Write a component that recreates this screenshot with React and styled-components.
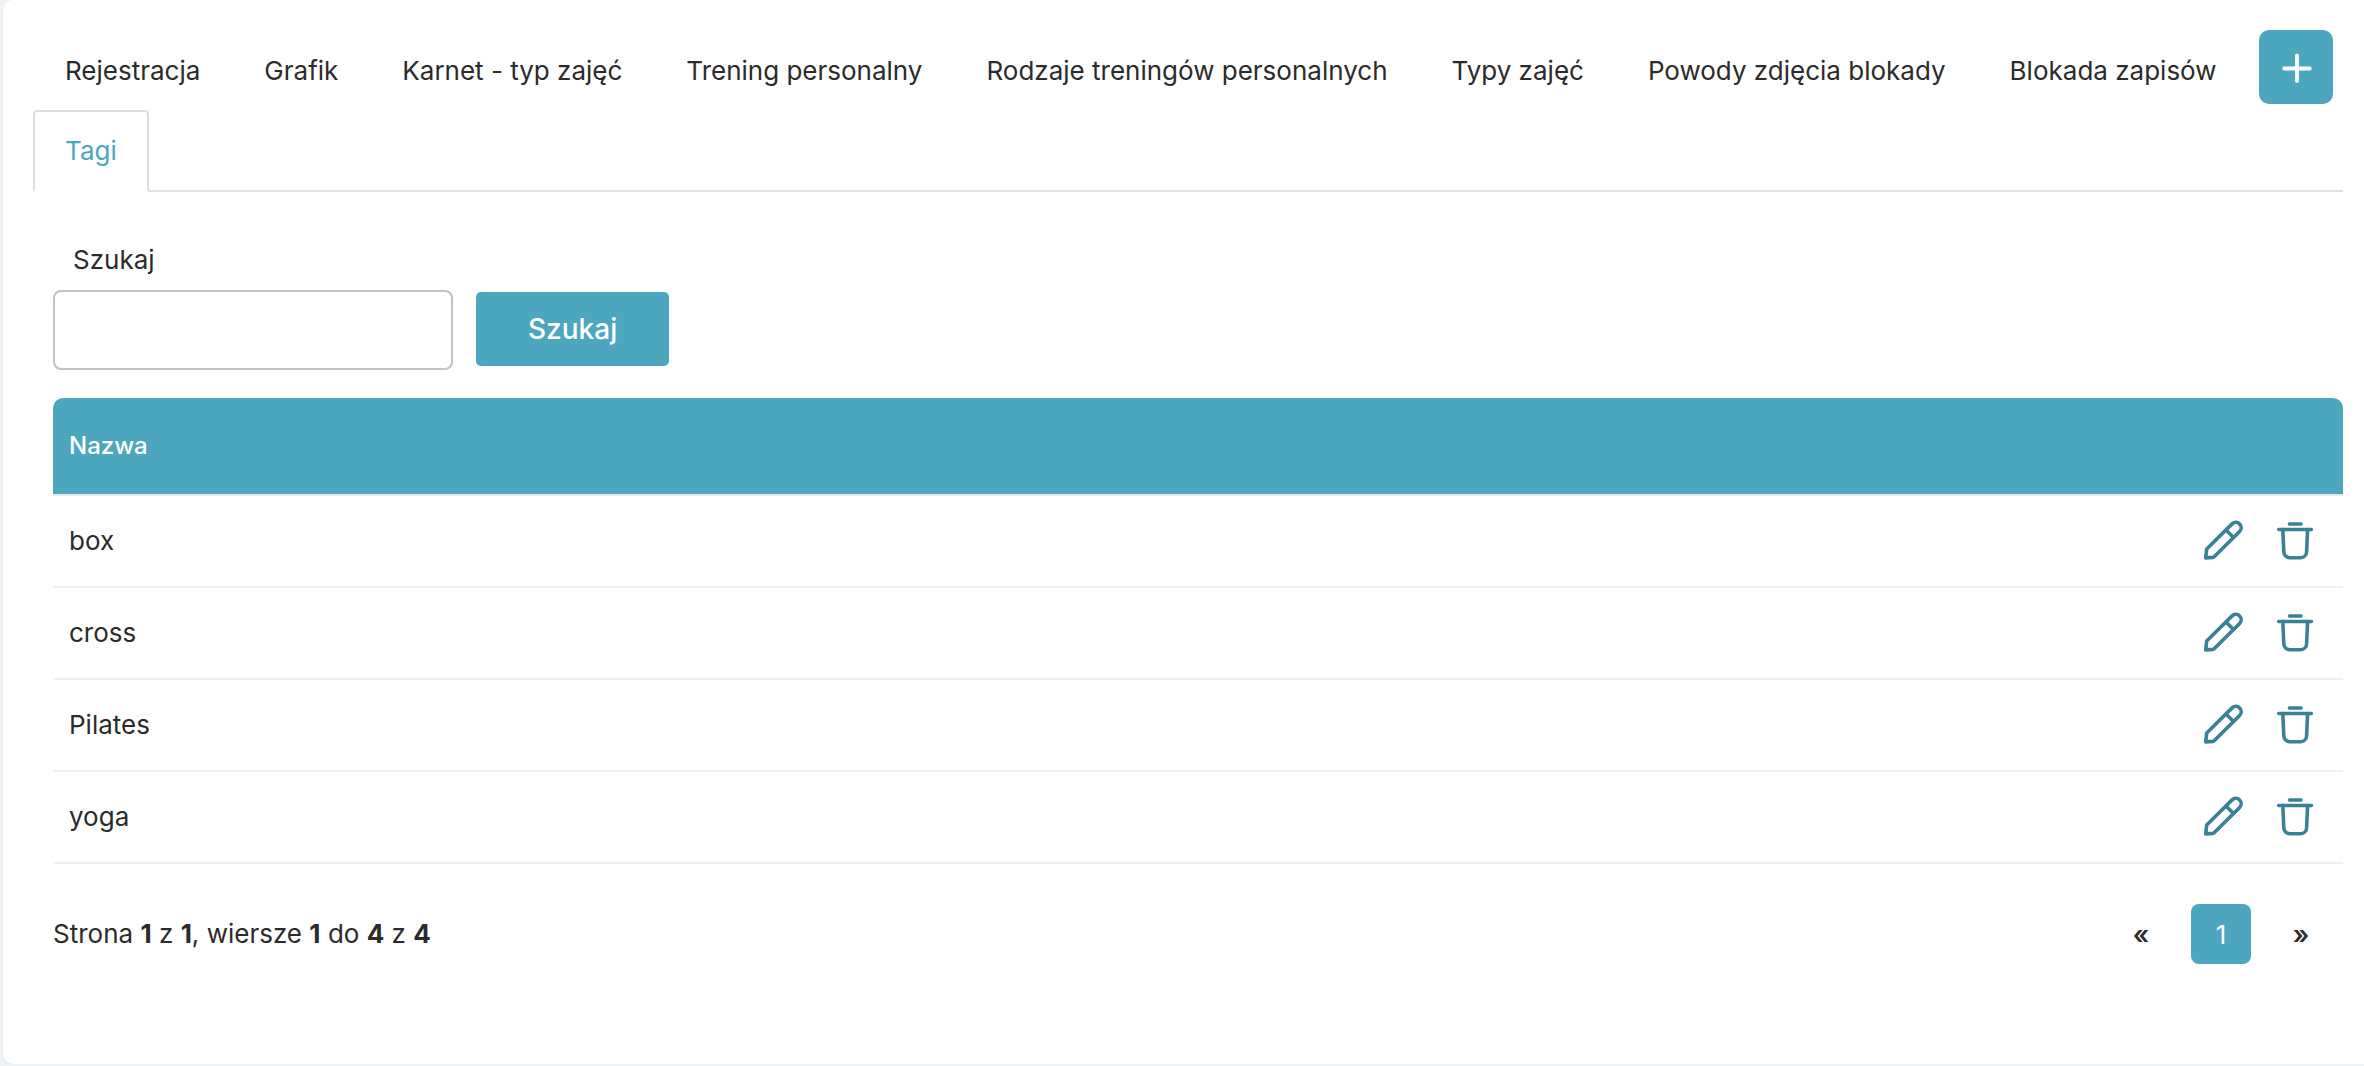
import React, { useState } from "react"
import styled, { createGlobalStyle } from "styled-components"

const GlobalStyle = createGlobalStyle`
  * {
    box-sizing: border-box;
  }

  body {
    margin: 0;
    background-color: #edf3f6;
    color: #2b2b2b;
    font-family: Inter, "Liberation Sans", sans-serif;
    font-size: 26px;
    line-height: 40px;
  }

  button,
  input {
    font-family: inherit;
  }
`

const Panel = styled.main`
  min-height: calc(100vh - 2px);
  margin-left: 3px;
  padding: 30px 21px 98px 30px;
  background-color: #fff;
  border-radius: 10px 0 0 10px;
  box-shadow: 0 2px 2px #e4e9e9;
`

const TabBar = styled.nav`
  display: flex;
  align-items: flex-start;
  justify-content: space-between;
  padding-right: 10px;
  border-bottom: 2px solid #dee2e6;
`

const Tabs = styled.div`
  display: flex;
  flex-wrap: wrap;
  flex: 1;
`

const Tab = styled.a`
  margin-bottom: -2px;
  padding: 19px 30px;
  border: 2px solid ${(props) => (props.$active ? "#dcdfe1" : "transparent")};
  border-bottom-color: ${(props) => (props.$active ? "#fff" : "transparent")};
  border-radius: 4px 4px 0 0;
  color: ${(props) => (props.$active ? "#4ca7be" : "inherit")};
  text-decoration: none;
  white-space: nowrap;
`

const AddButton = styled.button`
  display: flex;
  align-items: center;
  justify-content: center;
  width: 74px;
  height: 74px;
  padding: 0;
  border: 0;
  border-radius: 10px;
  background-color: #4ca7be;
  color: #fff;
  cursor: pointer;
`

const Content = styled.section`
  padding: 48px 0 0 20px;
`

const SearchForm = styled.form`
  display: flex;
  align-items: flex-end;
  gap: 23px;
  margin-bottom: 28px;
`

const Field = styled.div`
  display: flex;
  flex-direction: column;
  gap: 10px;

  label {
    padding-left: 20px;
  }

  input {
    width: 400px;
    height: 80px;
    padding: 0 20px;
    border: 2px solid #bdc3c7;
    border-radius: 8px;
    font-size: 26px;
  }
`

const SearchButton = styled.button`
  height: 74px;
  margin-bottom: 4px;
  padding: 0 52px;
  border: 0;
  border-radius: 5px;
  background-color: #4ca7be;
  color: #fff;
  font-size: 28px;
  font-weight: 500;
  cursor: pointer;
`

const Table = styled.table`
  width: 100%;
  border-spacing: 0;

  th {
    height: 98px;
    padding: 0 16px;
    border-bottom: 2px solid #e9e9e9;
    background-color: #4ca7be;
    background-clip: padding-box;
    color: #fff;
    font-size: 24px;
    font-weight: 500;
    text-align: left;
  }

  th:first-child {
    border-top-left-radius: 10px;
  }

  th:last-child {
    border-top-right-radius: 10px;
  }

  td {
    height: 92px;
    padding: 0 16px;
    border-bottom: 2px solid #eee;
  }
`

const Actions = styled.div`
  display: flex;
  justify-content: flex-end;
  gap: 24px;
  padding-right: 8px;
`

const IconButton = styled.button`
  display: flex;
  padding: 0;
  border: 0;
  background: none;
  color: #3a8196;
  cursor: pointer;
`

const Footer = styled.footer`
  display: flex;
  align-items: center;
  justify-content: space-between;
  padding: 40px 12px 0 0;
`

const Pagination = styled.div`
  display: flex;
  gap: 20px;
`

const PageButton = styled.button`
  width: 60px;
  height: 60px;
  padding: 0;
  border: 0;
  border-radius: 8px;
  background-color: ${(props) => (props.$active ? "#4ca7be" : "transparent")};
  color: ${(props) => (props.$active ? "#fff" : "#2b2b2b")};
  font-size: 26px;
  font-weight: ${(props) => (props.$active ? 400 : 600)};
  cursor: pointer;
`

const PlusIcon = () => (
  <svg width="34" height="34" viewBox="0 0 34 34" fill="none" stroke="currentColor" strokeWidth="3.8" strokeLinecap="round">
    <path d="M18 5.500v25.500M5.200 18.500h25.600" />
  </svg>
)

const PencilIcon = () => (
  <svg width="48" height="48" viewBox="0 0 48 48" fill="none" stroke="currentColor" strokeWidth="3.600" strokeLinecap="round" strokeLinejoin="round">
    <path d="M6.700 40.900l1-8.900L33.100 6.900a5.300 5.300 0 0 1 7.500 7.500L15.400 39.600q-.7.700-1.700.8z" />
    <path d="M27 13l7.500 7.500" />
  </svg>
)

const TrashIcon = () => (
  <svg width="48" height="48" viewBox="0 0 48 48" fill="none" stroke="currentColor" strokeWidth="3.600" strokeLinecap="round" strokeLinejoin="round">
    <path d="M18.500 7h11.500M7.700 12.500h32.700" />
    <path d="M11.800 12.500l1 22.500a6 6 0 0 0 6 5.700h10.800a6 6 0 0 0 6-5.700l1-22.500" />
  </svg>
)

const tabs = [
  "Rejestracja",
  "Grafik",
  "Karnet - typ zajęć",
  "Trening personalny",
  "Rodzaje treningów personalnych",
  "Typy zajęć",
  "Powody zdjęcia blokady",
  "Blokada zapisów",
  "Tagi",
]

const tags = ["box", "cross", "Pilates", "yoga"]

const App = () => {
  const [search, setSearch] = useState("")

  return (
    <>
      <GlobalStyle />
      <Panel>
        <TabBar>
          <Tabs>
            {tabs.map((name) => (
              <Tab key={name} href="#" $active={name === "Tagi"}>
                {name}
              </Tab>
            ))}
          </Tabs>
          <AddButton type="button" aria-label="Dodaj">
            <PlusIcon />
          </AddButton>
        </TabBar>
        <Content>
          <SearchForm onSubmit={(e) => e.preventDefault()}>
            <Field>
              <label htmlFor="search">Szukaj</label>
              <input id="search" type="text" value={search} onChange={(e) => setSearch(e.target.value)} />
            </Field>
            <SearchButton type="submit">Szukaj</SearchButton>
          </SearchForm>
          <Table>
            <thead>
              <tr>
                <th>Nazwa</th>
                <th aria-label="Akcje"></th>
              </tr>
            </thead>
            <tbody>
              {tags.map((tag) => (
                <tr key={tag}>
                  <td>{tag}</td>
                  <td>
                    <Actions>
                      <IconButton type="button" aria-label={`Edytuj ${tag}`}>
                        <PencilIcon />
                      </IconButton>
                      <IconButton type="button" aria-label={`Usuń ${tag}`}>
                        <TrashIcon />
                      </IconButton>
                    </Actions>
                  </td>
                </tr>
              ))}
            </tbody>
          </Table>
          <Footer>
            <div>
              Strona <b>1</b> z <b>1</b>, wiersze <b>1</b> do <b>4</b> z <b>4</b>
            </div>
            <Pagination>
              <PageButton type="button">«</PageButton>
              <PageButton type="button" $active>1</PageButton>
              <PageButton type="button">»</PageButton>
            </Pagination>
          </Footer>
        </Content>
      </Panel>
    </>
  )
}

export default App
